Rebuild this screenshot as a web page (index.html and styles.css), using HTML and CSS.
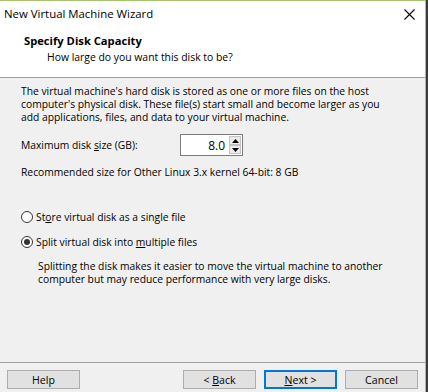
FILE: index.html
```html
<!DOCTYPE html>
<html lang="en">
<head>
    <meta charset="UTF-8">
    <title>New Virtual Machine Wizard</title>
    <link rel="stylesheet" href="styles.css">
</head>
<body>
    <div class="window">
        <div class="titlebar">
            <span class="title">New Virtual Machine Wizard</span>
            <svg class="close" width="11" height="11" viewBox="0 0 11 11">
                <path d="M0.5 0.5 L10.5 10.5 M10.5 0.5 L0.5 10.5" stroke="#000" stroke-width="1.1" fill="none"/>
            </svg>
        </div>

        <div class="header">
            <h1>Specify Disk Capacity</h1>
            <p>How large do you want this disk to be?</p>
        </div>

        <div class="content">
            <p class="intro">The virtual machine's hard disk is stored as one or more files on the host<br>
                computer's physical disk. These file(s) start small and become larger as you<br>
                add applications, files, and data to your virtual machine.</p>

            <div class="size-row">
                <label for="size">Maximum disk <u>s</u>ize (GB):</label>
                <div class="spin">
                    <input type="text" id="size" value="8.0">
                    <div class="spin-buttons">
                        <span class="spin-btn"><svg width="7" height="4" viewBox="0 0 7 4"><path d="M0 4 L3.5 0 L7 4 Z" fill="#000"/></svg></span>
                        <span class="spin-btn"><svg width="7" height="4" viewBox="0 0 7 4"><path d="M0 0 L3.5 4 L7 0 Z" fill="#000"/></svg></span>
                    </div>
                </div>
            </div>

            <p class="recommend">Recommended size for Other Linux 3.x kernel 64-bit: 8 GB</p>

            <div class="options">
                <label class="radio">
                    <span class="dot"></span>
                    <span>St<u>o</u>re virtual disk as a single file</span>
                </label>
                <label class="radio checked">
                    <span class="dot"></span>
                    <span>Split virtual disk into <u>m</u>ultiple files</span>
                </label>
                <p class="note">Splitting the disk makes it easier to move the virtual machine to another<br>
                    computer but may reduce performance with very large disks.</p>
            </div>
        </div>

        <div class="footer">
            <button>Help</button>
            <div class="nav">
                <button>&lt; <u>B</u>ack</button>
                <button class="default"><u>N</u>ext &gt;</button>
                <button>Cancel</button>
            </div>
        </div>
    </div>
</body>
</html>
```

FILE: styles.css
```css
* {
    box-sizing: border-box;
}
body {
    margin: 0;
    background-color: #3a3a3a;
    font-family: "Open Sans", "Noto Sans", sans-serif;
    font-size: 10.3px;
    color: #000;
}
.window {
    width: 426px;
    height: 392px;
    border-top: 1px solid #a9c46e;
    border-right: 1px solid #a9c46e;
    background-color: #f0f0f0;
    display: flex;
    flex-direction: column;
}
.titlebar {
    height: 29px;
    flex-shrink: 0;
    background-color: #fff;
    display: flex;
    align-items: center;
    justify-content: space-between;
    padding: 0 10px 0 4px;
}
.title {
    font-size: 11.4px;
    margin-top: -4px;
}
.close {
    margin-top: -3px;
}
.header {
    height: 48px;
    flex-shrink: 0;
    background-color: #fff;
    border-bottom: 1px solid #a0a0a0;
}
.header h1 {
    margin: 3px 0 0 24px;
    font-size: 11.2px;
    font-weight: bold;
    line-height: 16px;
}
.header p {
    margin: 0 0 0 47px;
    font-size: 10.4px;
    line-height: 16px;
}
.content {
    flex: 1;
    padding: 7px 21px 0 21px;
}
.intro {
    margin: 0;
    line-height: 13px;
}
.size-row {
    display: flex;
    align-items: center;
    margin-top: 10px;
}
.size-row label {
    width: 159px;
}
.spin {
    display: flex;
    width: 63px;
    height: 22px;
    border: 1px solid #7a7a7a;
    background-color: #fff;
}
.spin input {
    width: 47px;
    border: none;
    padding: 0 3px 0 0;
    text-align: right;
    font-family: inherit;
    font-size: 12px;
    outline: none;
}
.spin-buttons {
    display: flex;
    flex-direction: column;
    width: 14px;
    padding: 1px;
}
.spin-btn {
    flex: 1;
    display: flex;
    align-items: center;
    justify-content: center;
    background-color: #ececec;
    border: 1px solid #c2c2c2;
}
.recommend {
    margin: 10px 0 0 0;
    line-height: 13px;
}
.options {
    margin-top: 31px;
}
.radio {
    display: flex;
    align-items: center;
    gap: 3px;
    height: 13px;
    margin-bottom: 12px;
}
.dot {
    width: 12px;
    height: 12px;
    border: 1px solid #333;
    border-radius: 50%;
    background-color: #fff;
    display: flex;
    align-items: center;
    justify-content: center;
}
.radio.checked .dot::after {
    content: "";
    width: 6px;
    height: 6px;
    border-radius: 50%;
    background-color: #333;
}
.note {
    margin: 0 0 0 17px;
    line-height: 13px;
}
.footer {
    height: 30px;
    flex-shrink: 0;
    border-top: 1px solid #a0a0a0;
    display: flex;
    justify-content: space-between;
    padding: 7px 7px 0 7px;
}
.nav {
    display: flex;
    gap: 8px;
}
button {
    width: 73px;
    height: 19px;
    background-color: #e1e1e1;
    border: 1px solid #adadad;
    font-family: inherit;
    font-size: 10.6px;
    padding: 0;
    color: #000;
}
button.default {
    border: 2px solid #0078d7;
}
```
